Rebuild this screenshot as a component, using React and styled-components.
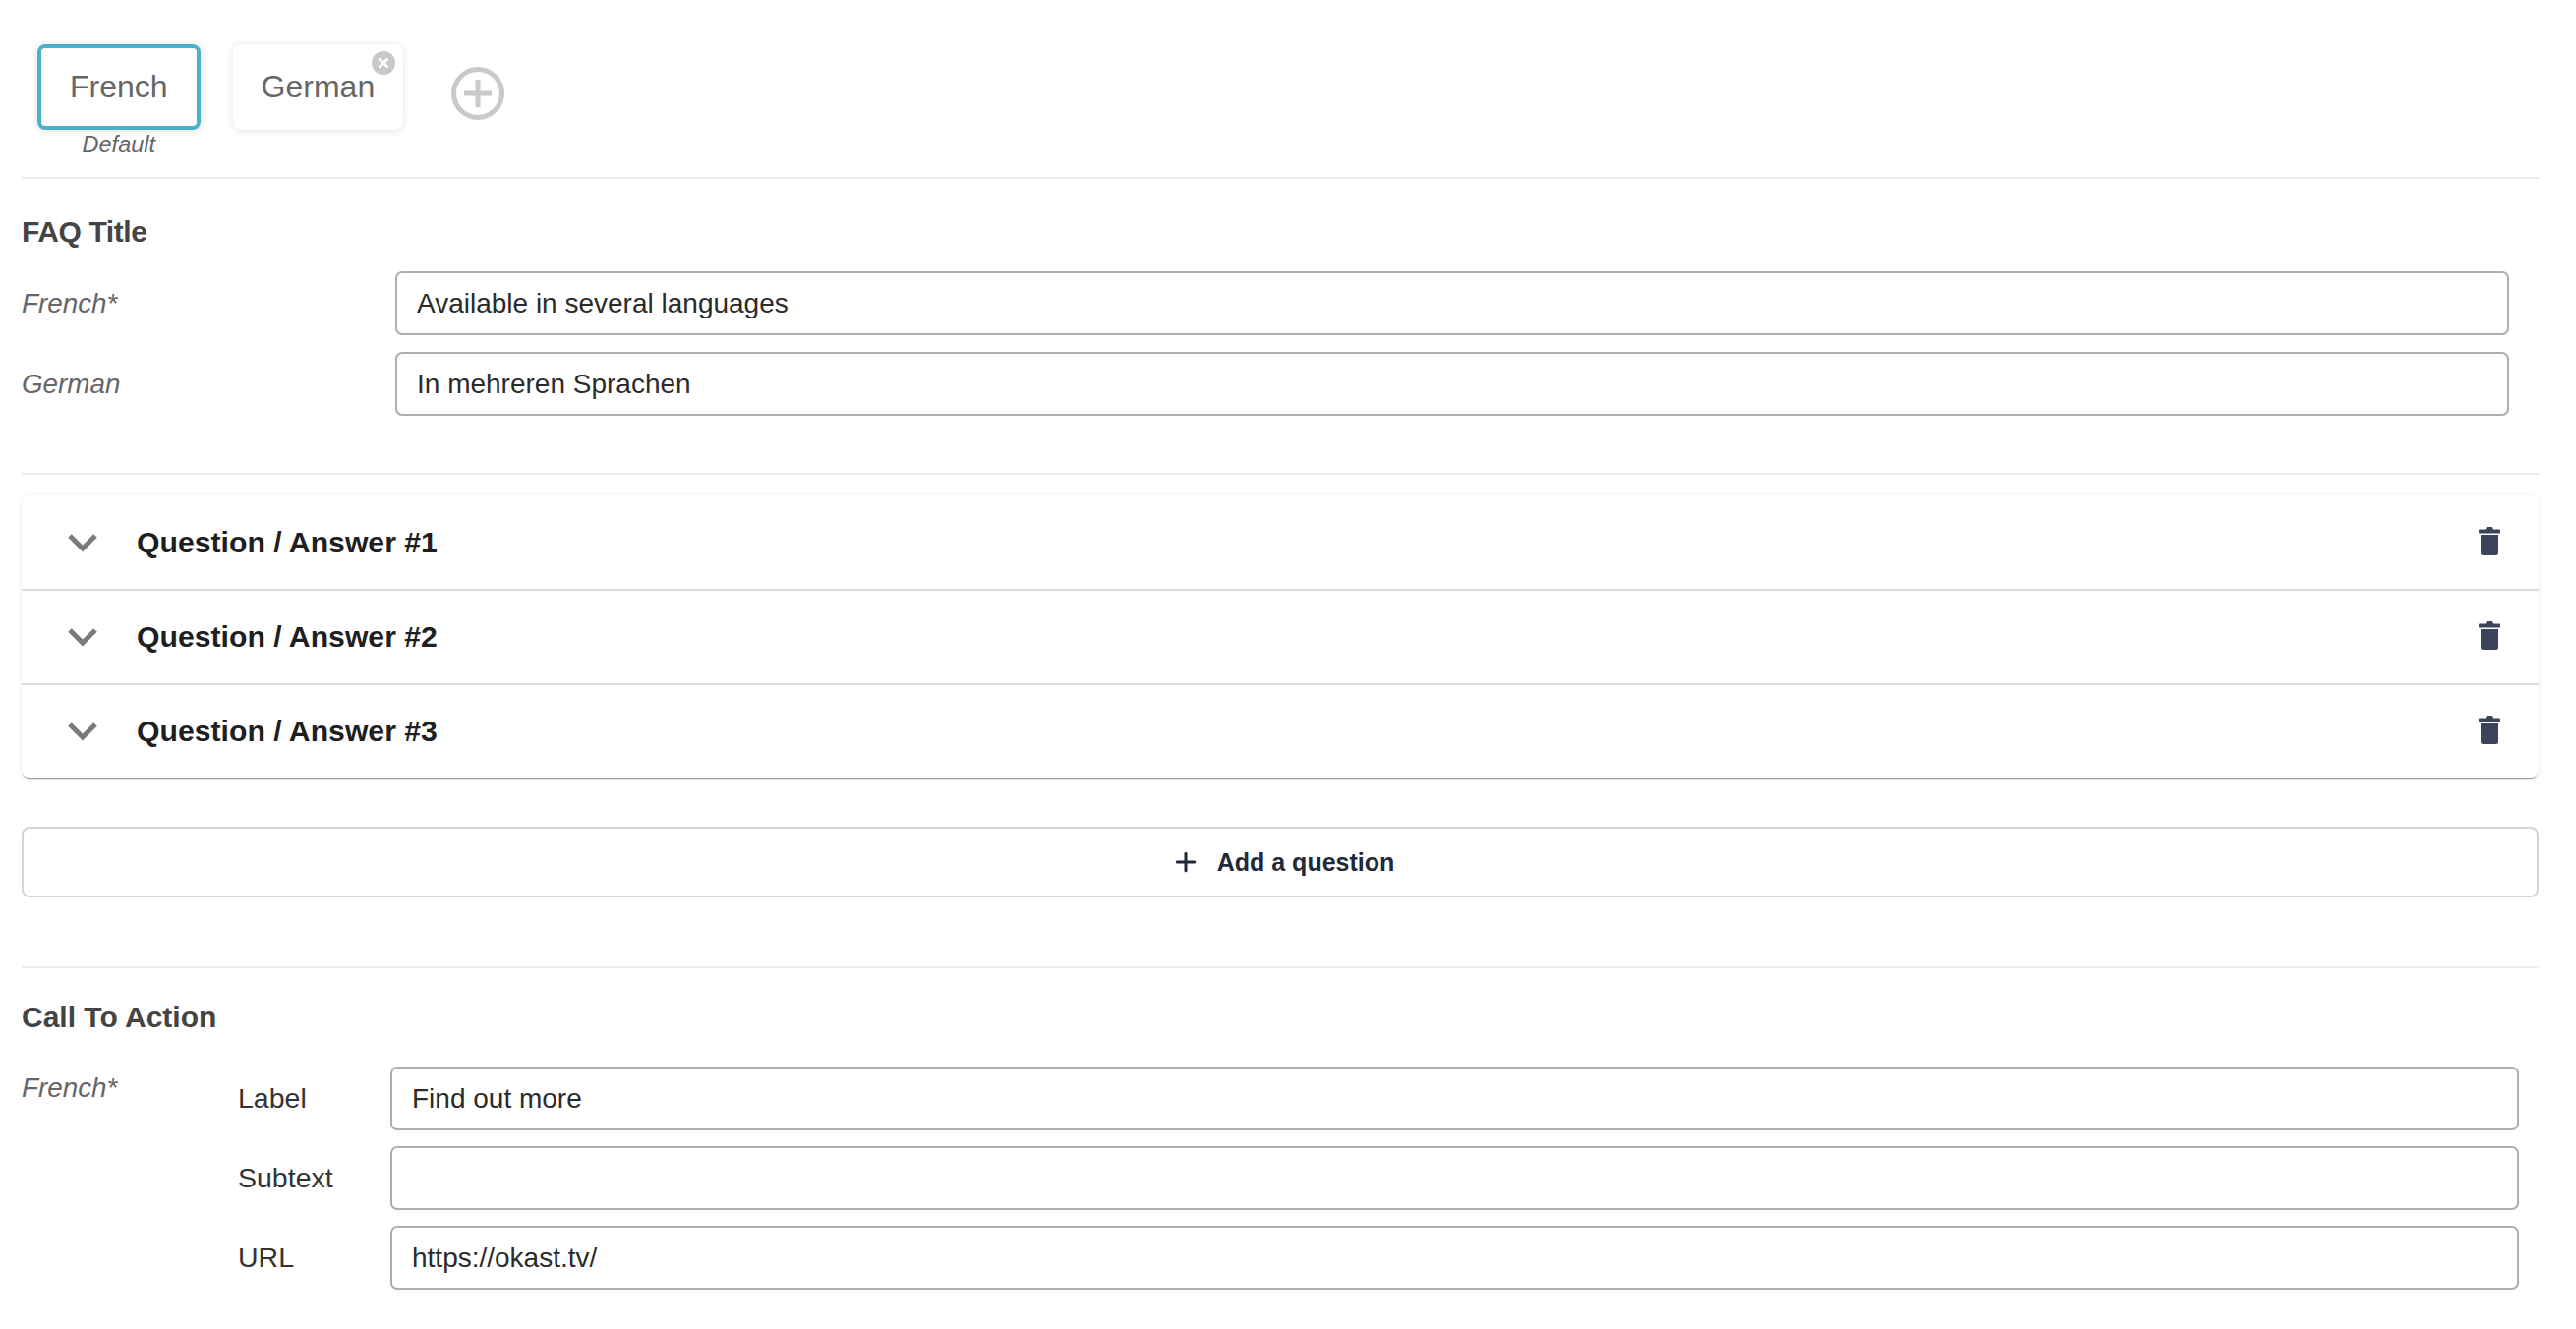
import React from "react";
import styled, { createGlobalStyle } from "styled-components";
import { Plus } from "lucide-react";

const Global = createGlobalStyle`
  html, body { margin: 0; padding: 0; background: #fff; }
  body { font-family: "Liberation Sans", Arial, sans-serif; color: #333; }
`;

const Page = styled.div`
  width: 2620px;
  height: 1352px;
  overflow: hidden;
  box-sizing: border-box;
  padding: 45px 38px 0 22px;
`;

const Tabs = styled.div`
  display: flex;
  align-items: flex-start;
  padding-left: 16px;
  height: 135px;
  border-bottom: 2px solid #ececf0;
`;

const TabWrap = styled.div`
  display: flex;
  flex-direction: column;
  align-items: center;
  margin-right: 33px;
`;

const Tab = styled.div`
  position: relative;
  box-sizing: border-box;
  height: 87px;
  padding: 0 29px;
  display: flex;
  align-items: center;
  justify-content: center;
  background: #fff;
  border-radius: 8px;
  border: ${(p) => (p.$active ? "4px solid #4bb3c9" : "none")};
  box-shadow: 0 1px 8px rgba(0, 0, 0, 0.12);
  font-size: 32px;
  color: #666;
`;

const TabNote = styled.div`
  margin-top: 1px;
  font-size: 23.5px;
  line-height: 28px;
  font-style: italic;
  color: #666;
`;

const RemoveBadge = styled.svg`
  position: absolute;
  top: 7px;
  right: 8px;
  width: 24px;
  height: 24px;
`;

const AddLang = styled.svg`
  width: 54px;
  height: 54px;
  margin-top: 23px;
  margin-left: 16px;
`;

const Section = styled.section`
  padding-top: ${(p) => p.$top || 0}px;
`;

const Title = styled.h3`
  margin: 0 0 20px;
  font-size: 30px;
  line-height: 40px;
  font-weight: 700;
  color: #444;
  letter-spacing: ${(p) => p.$spacing || 0}px;
`;

const FieldRow = styled.div`
  display: flex;
  align-items: center;
  margin-bottom: ${(p) => p.$gap || 17}px;
  padding-right: ${(p) => p.$pr || 0}px;
`;

const LangLabel = styled.div`
  width: 380px;
  flex: none;
  font-size: 27.8px;
  font-style: italic;
  color: #666;
`;

const TextInput = styled.input`
  flex: 1;
  min-width: 0;
  box-sizing: border-box;
  height: 65px;
  padding: 0 20px;
  border: 2px solid #adadad;
  border-radius: 7px;
  background: #fff;
  font-family: inherit;
  font-size: 28px;
  color: #2b2b2b;
  outline: none;
`;

const Divider = styled.hr`
  margin: ${(p) => p.$top}px 0 0;
  border: 0;
  height: 2px;
  background: #ececf0;
`;

const Accordion = styled.div`
  margin-top: 21px;
  border-radius: 8px;
  background: #fff;
  box-shadow: 0 2px 1px -1px rgba(0, 0, 0, 0.4), 0 1px 5px rgba(0, 0, 0, 0.1);
`;

const AccordionRow = styled.div`
  display: flex;
  align-items: center;
  box-sizing: border-box;
  height: ${(p) => (p.$first ? 95 : 96)}px;
  padding: 0 39px 0 46px;
  border-top: ${(p) => (p.$first ? "none" : "2px solid #dcdcdc")};
`;

const Chevron = styled.svg`
  width: 32px;
  height: 20px;
  margin-right: 39px;
`;

const RowTitle = styled.div`
  flex: 1;
  font-size: 30.2px;
  font-weight: 700;
  color: #1f1f1f;
`;

const Trash = styled.svg`
  width: 22px;
  height: 29px;
  margin-top: -3px;
`;

const AddButton = styled.button`
  display: flex;
  align-items: center;
  justify-content: center;
  gap: 17px;
  width: 100%;
  height: 72px;
  margin-top: 50px;
  padding: 0 0 0 5px;
  background: #fff;
  border: 2px solid #d1d5db;
  border-radius: 8px;
  font-family: inherit;
  font-size: 25px;
  font-weight: 700;
  color: #1f2937;
`;

const CtaGrid = styled.div`
  display: flex;
  margin-top: 30px;
`;

const CtaLang = styled(LangLabel)`
  width: 220px;
  line-height: 40px;
  margin-top: 2px;
`;

const CtaFields = styled.div`
  flex: 1;
  min-width: 0;
`;

const SubLabel = styled.div`
  width: 155px;
  flex: none;
  font-size: 28.5px;
  color: #333;
`;

const rows = ["Question / Answer #1", "Question / Answer #2", "Question / Answer #3"];
const cta = [
  { label: "Label", value: "Find out more" },
  { label: "Subtext", value: "" },
  { label: "URL", value: "https://okast.tv/" },
];

export default function App() {
  return (
    <Page>
      <Global />
      <Tabs>
        <TabWrap>
          <Tab $active>French</Tab>
          <TabNote>Default</TabNote>
        </TabWrap>
        <TabWrap>
          <Tab>
            German
            <RemoveBadge viewBox="0 0 24 24">
              <circle cx="12" cy="12" r="12" fill="#c8c8c8" />
              <path d="M7.5 7.5l9 9M16.5 7.5l-9 9" stroke="#fff" strokeWidth="2.6" />
            </RemoveBadge>
          </Tab>
        </TabWrap>
        <AddLang viewBox="0 0 54 54">
          <circle cx="27" cy="27" r="24.5" fill="none" stroke="#c9c9c9" strokeWidth="5" />
          <path d="M27 13v28M13 27h28" stroke="#c9c9c9" strokeWidth="5" />
        </AddLang>
      </Tabs>

      <Section $top={34}>
        <Title $spacing={-0.4}>FAQ Title</Title>
        <FieldRow $pr={30}>
          <LangLabel>French*</LangLabel>
          <TextInput defaultValue="Available in several languages" />
        </FieldRow>
        <FieldRow $pr={30}>
          <LangLabel>German</LangLabel>
          <TextInput defaultValue="In mehreren Sprachen" />
        </FieldRow>
      </Section>

      <Divider $top={58} />

      <Accordion>
        {rows.map((title, i) => (
          <AccordionRow key={title} $first={i === 0}>
            <Chevron viewBox="0 0 32 20">
              <path d="M3 3l13 13L29 3" fill="none" stroke="#7a7a7a" strokeWidth="5" />
            </Chevron>
            <RowTitle>{title}</RowTitle>
            <Trash viewBox="0 0 22 29">
              <path
                fill="#3c4459"
                d="M7 2.500 8 0h6l1 2.500h6a1 1 0 0 1 1 1v2a1 1 0 0 1-1 1H1a1 1 0 0 1-1-1v-2a1 1 0 0 1 1-1zM2 8h18v18.500a2.500 2.500 0 0 1-2.500 2.500h-13A2.500 2.500 0 0 1 2 26.500z"
              />
            </Trash>
          </AccordionRow>
        ))}
      </Accordion>

      <AddButton>
        <Plus size={30} strokeWidth={2.4} />
        Add a question
      </AddButton>

      <Divider $top={70} />

      <Section $top={30}>
        <Title>Call To Action</Title>
        <CtaGrid>
          <CtaLang>French*</CtaLang>
          <CtaFields>
            {cta.map((f) => (
              <FieldRow key={f.label} $pr={20} $gap={16}>
                <SubLabel>{f.label}</SubLabel>
                <TextInput defaultValue={f.value} />
              </FieldRow>
            ))}
          </CtaFields>
        </CtaGrid>
      </Section>
    </Page>
  );
}
